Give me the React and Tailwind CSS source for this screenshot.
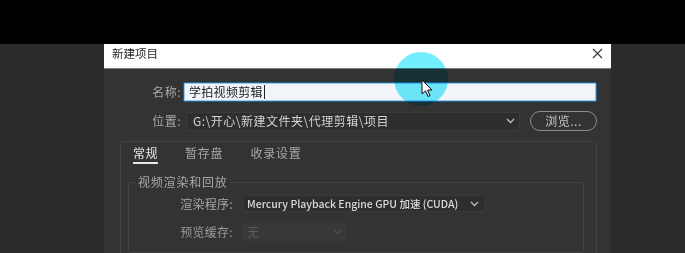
import React from "react";

function Chevron({ className = "" }) {
  return (
    <svg width="9" height="6" viewBox="0 0 9 6" className={className}>
      <path d="M1 1 L4.5 4.5 L8 1" fill="none" stroke="currentColor" strokeWidth="1.3" />
    </svg>
  );
}

export default function App() {
  return (
    <div className="relative w-[685px] h-[253px] overflow-hidden bg-[#2b2b2b] font-['Noto_Sans_CJK_SC','Noto_Sans',sans-serif] flex flex-col">
      <div className="h-[44px] bg-black shrink-0" />
      <div className="flex flex-1 pl-[104px]">
        <div className="w-[507px] flex flex-col">
          {/* title bar */}
          <div className="h-[25px] bg-white border-b border-[#7d7d7d] flex items-start justify-between pl-[8px] pr-[8px] pt-[1px] shrink-0">
            <span className="text-[11.5px] leading-[16px] text-[#262626]">新建项目</span>
            <svg width="11" height="11" viewBox="0 0 11 11" className="mt-[3px]">
              <path d="M1 1 L10 10 M10 1 L1 10" stroke="#333" strokeWidth="1.1" />
            </svg>
          </div>
          {/* body */}
          <div className="flex-1 bg-[#333333] flex flex-col pt-[13px]">
            <div className="flex items-center h-[20px]">
              <div className="w-[79px] text-right text-[12px] leading-[16px] text-[#a8a8a8] tracking-[0.5px] pr-[2px]">名称:</div>
              <div className="w-[414px] h-[20px] bg-[#f1f5f9] border-[1.5px] border-[#1f6396] rounded-[2px] flex items-center pl-[5px] shadow-[inset_0_0_0_1px_#9cc8ee]">
                <span className="text-[12px] leading-[16px] text-[#222] tracking-[0.3px]">学拍视频剪辑</span>
                <span className="w-[1px] h-[14px] bg-[#222] ml-[1px]" />
              </div>
            </div>
            <div className="flex items-center h-[20px] mt-[9px]">
              <div className="w-[79px] text-right text-[12px] leading-[16px] text-[#a8a8a8] tracking-[0.5px] pr-[2px]">位置:</div>
              <div className="ml-[3px] w-[334px] h-[19px] bg-[#2e2e2e] border border-[#3a3a3a] rounded-[2px] flex items-center justify-between pl-[6px] pr-[4px]">
                <span className="text-[12px] leading-[16px] text-[#d2d2d2] tracking-[0.5px]">G:\开心\新建文件夹\代理剪辑\项目</span>
                <Chevron className="text-[#bdbdbd]" />
              </div>
              <div className="ml-[10px] w-[67px] h-[20px] rounded-full border border-[#8e8e8e] flex items-center justify-center">
                <span className="text-[12px] leading-[16px] text-[#c8c8c8] tracking-[0.5px]">浏览...</span>
              </div>
            </div>
            {/* tab panel */}
            <div className="ml-[16px] mt-[10px] w-[477px] flex-1 border-t border-l border-r border-[#414141] rounded-t-[3px] flex flex-col">
              <div className="flex pl-[12px] pt-[3px] gap-[27px]">
                <div className="h-[19px] border-b-2 border-[#e6e6e6] text-[12px] leading-[16px] text-[#e6e6e6] tracking-[0.5px]">常规</div>
                <div className="h-[19px] text-[12px] leading-[16px] text-[#a8a8a8] tracking-[0.8px]">暂存盘</div>
                <div className="h-[19px] text-[12px] leading-[16px] text-[#a8a8a8] tracking-[0.8px]">收录设置</div>
              </div>
              <fieldset className="ml-[7px] mt-[10px] w-[456px] flex-1 border border-[#414141] rounded-[3px] p-0 m-0 min-w-0">
                <legend className="ml-[7px] px-[2px] text-[12px] leading-[16px] text-[#a8a8a8] tracking-[0.8px]">视频渲染和回放</legend>
                <div className="flex items-center mt-[5px] h-[17px]">
                  <div className="w-[104px] text-right text-[12px] leading-[16px] text-[#a8a8a8] tracking-[0.3px]">渲染程序:</div>
                  <div className="ml-[9px] w-[244px] h-[17px] bg-[#2e2e2e] border border-[#3a3a3a] rounded-[2px] flex items-center justify-between pl-[4px] pr-[4px]">
                    <span className="text-[10.5px] leading-[16px] text-[#dadada] font-medium whitespace-nowrap">Mercury Playback Engine GPU 加速 (CUDA)</span>
                    <Chevron className="text-[#bdbdbd] mr-[2px]" />
                  </div>
                </div>
                <div className="flex items-center mt-[11px] h-[18px]">
                  <div className="w-[104px] text-right text-[12px] leading-[16px] text-[#9a9a9a] tracking-[0.3px]">预览缓存:</div>
                  <div className="ml-[9px] w-[105px] h-[18px] bg-[#383838] rounded-[2px] flex items-center justify-between pl-[5px] pr-[5px]">
                    <span className="text-[12px] leading-[16px] text-[#5a5a5a]">无</span>
                    <Chevron className="text-[#4f4f4f]" />
                  </div>
                </div>
              </fieldset>
            </div>
          </div>
        </div>
      </div>
      {/* cursor highlight */}
      <div className="absolute left-[394px] top-[52px] w-[54px] h-[54px] rounded-full bg-[#72eefe] mix-blend-multiply" />
      <svg className="absolute left-[421px] top-[79px]" width="14" height="20" viewBox="0 0 14 20">
        <path d="M1 1 L1 15 L4.5 11.8 L7 17.5 L9 16.6 L6.6 11 L11 11 Z" fill="#fff" stroke="#111" strokeWidth="1" strokeLinejoin="round" />
      </svg>
    </div>
  );
}
